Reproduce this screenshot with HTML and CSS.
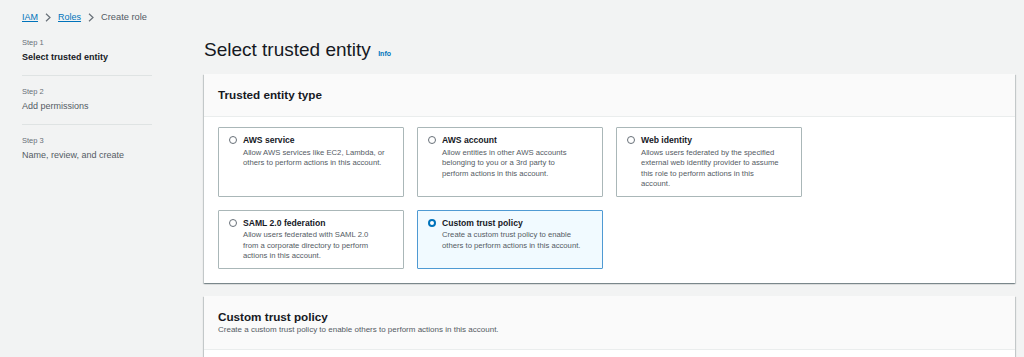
FILE: index.html
```html
<!DOCTYPE html>
<html lang="en">
<head>
    <meta charset="UTF-8">
    <meta name="viewport" content="width=device-width, initial-scale=1.0">
    <title>IAM - Create role</title>
    <link rel="stylesheet" href="styles.css">
</head>
<body>
    <div class="breadcrumbs">
        <a href="#">IAM</a>
        <svg class="chevron" width="6" height="9" viewBox="0 0 6 9"><path d="M1 0.8 L5 4.5 L1 8.2" fill="none" stroke="#687078" stroke-width="1.2"/></svg>
        <a href="#">Roles</a>
        <svg class="chevron" width="6" height="9" viewBox="0 0 6 9"><path d="M1 0.8 L5 4.5 L1 8.2" fill="none" stroke="#687078" stroke-width="1.2"/></svg>
        <span class="current">Create role</span>
    </div>

    <div class="layout">
        <nav class="steps">
            <div class="step">
                <div class="step-label">Step 1</div>
                <div class="step-title active">Select trusted entity</div>
            </div>
            <div class="step">
                <div class="step-label">Step 2</div>
                <div class="step-title">Add permissions</div>
            </div>
            <div class="step">
                <div class="step-label">Step 3</div>
                <div class="step-title">Name, review, and create</div>
            </div>
        </nav>

        <main class="content">
            <h1 class="page-title">Select trusted entity <a href="#" class="info">Info</a></h1>

            <section class="panel">
                <div class="panel-header">
                    <h2>Trusted entity type</h2>
                </div>
                <div class="panel-body">
                    <div class="tiles">
                        <label class="tile">
                            <span class="radio"></span>
                            <span class="tile-text">
                                <span class="tile-title">AWS service</span>
                                <span class="tile-desc">Allow AWS services like EC2, Lambda, or<br>others to perform actions in this account.</span>
                            </span>
                        </label>
                        <label class="tile">
                            <span class="radio"></span>
                            <span class="tile-text">
                                <span class="tile-title">AWS account</span>
                                <span class="tile-desc">Allow entities in other AWS accounts<br>belonging to you or a 3rd party to<br>perform actions in this account.</span>
                            </span>
                        </label>
                        <label class="tile">
                            <span class="radio"></span>
                            <span class="tile-text">
                                <span class="tile-title">Web identity</span>
                                <span class="tile-desc">Allows users federated by the specified<br>external web identity provider to assume<br>this role to perform actions in this<br>account.</span>
                            </span>
                        </label>
                        <label class="tile">
                            <span class="radio"></span>
                            <span class="tile-text">
                                <span class="tile-title">SAML 2.0 federation</span>
                                <span class="tile-desc">Allow users federated with SAML 2.0<br>from a corporate directory to perform<br>actions in this account.</span>
                            </span>
                        </label>
                        <label class="tile selected">
                            <span class="radio checked"></span>
                            <span class="tile-text">
                                <span class="tile-title">Custom trust policy</span>
                                <span class="tile-desc">Create a custom trust policy to enable<br>others to perform actions in this account.</span>
                            </span>
                        </label>
                    </div>
                </div>
            </section>

            <section class="panel">
                <div class="panel-header">
                    <h2>Custom trust policy</h2>
                    <p class="panel-desc">Create a custom trust policy to enable others to perform actions in this account.</p>
                </div>
                <div class="panel-body empty"></div>
            </section>
        </main>
    </div>
</body>
</html>
```

FILE: styles.css
```css
body {
    font-family: "Liberation Sans", Arial, sans-serif;
    margin: 0;
    padding: 0;
    background-color: #f2f3f3;
    color: #16191f;
    overflow: hidden;
}
.breadcrumbs {
    display: flex;
    align-items: center;
    gap: 7px;
    padding: 11px 22px 0;
    height: 12px;
    font-size: 9px;
    line-height: 12px;
}
.breadcrumbs a {
    color: #0073bb;
    text-decoration: underline;
}
.breadcrumbs .current {
    color: #545b64;
    font-size: 9.3px;
}
.layout {
    display: flex;
    margin-top: 4px;
}
.steps {
    width: 130px;
    margin-left: 22px;
    margin-right: 52px;
    flex-shrink: 0;
}
.step {
    padding: 10px 0 12px;
    border-bottom: 1px solid #dfe3e3;
}
.step:last-child {
    border-bottom: none;
}
.step-label {
    font-size: 7.5px;
    line-height: 11px;
    color: #687078;
    margin-bottom: 3px;
}
.step-title {
    font-size: 9px;
    line-height: 12px;
    color: #545b64;
}
.step-title.active {
    font-weight: bold;
    color: #16191f;
}
.content {
    flex: 1;
    margin-right: 9px;
}
.page-title {
    font-size: 19px;
    line-height: 24px;
    font-weight: normal;
    margin: 11px 0 12px;
}
.info {
    font-size: 7px;
    line-height: 1;
    font-weight: bold;
    color: #0073bb;
    text-decoration: none;
    margin-left: 2px;
}
.panel {
    background-color: white;
    box-shadow: 0 1px 1px 0 rgba(0,28,36,0.3), 1px 1px 1px 0 rgba(0,28,36,0.15), -1px 1px 1px 0 rgba(0,28,36,0.15);
    margin-bottom: 13px;
}
.panel-header {
    background-color: #fafafa;
    border-bottom: 1px solid #eaeded;
    padding: 13px 14px 14px;
}
.panel-header h2 {
    font-size: 11.7px;
    line-height: 15px;
    margin: 0;
}
.panel-desc {
    font-size: 8px;
    line-height: 10px;
    color: #545b64;
    margin: 1px 0 0;
}
.panel-body {
    padding: 10px 14px 14px;
}
.panel-body.empty {
    height: 40px;
}
.tiles {
    display: grid;
    grid-template-columns: repeat(3, 186px);
    gap: 13px;
}
.tile {
    display: flex;
    gap: 6px;
    border: 1px solid #aab7b8;
    border-radius: 1px;
    padding: 6px 10px 6px 10px;
    background-color: white;
    cursor: pointer;
}
.tile.selected {
    border-color: #4f9ad3;
    background-color: #f1faff;
}
.radio {
    width: 8px;
    height: 8px;
    margin-top: 2px;
    border: 1px solid #687078;
    border-radius: 50%;
    background-color: white;
    box-sizing: border-box;
    flex-shrink: 0;
}
.radio.checked {
    border: 2.5px solid #0073bb;
}
.tile-text {
    display: flex;
    flex-direction: column;
}
.tile-title {
    font-size: 8.6px;
    line-height: 12px;
    font-weight: bold;
    color: #16191f;
}
.tile-desc {
    font-size: 7.7px;
    line-height: 10.5px;
    color: #545b64;
    margin-top: 1.5px;
    white-space: nowrap;
}
```
